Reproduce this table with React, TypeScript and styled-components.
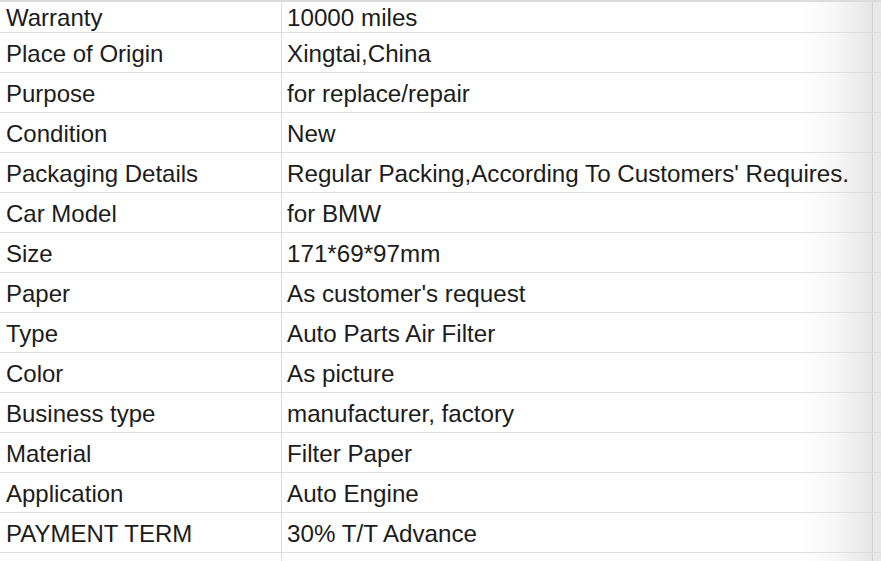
import React from "react";
import styled, { createGlobalStyle } from "styled-components";

const Global = createGlobalStyle`
  html, body { margin: 0; padding: 0; background: #ffffff; }
  body { font-family: "Liberation Sans", Arial, sans-serif; overflow: hidden; }
  *, *::before, *::after { box-sizing: border-box; }
`;

const rows: [string, string][] = [
  ["Warranty", "10000 miles"],
  ["Place of Origin", "Xingtai,China"],
  ["Purpose", "for replace/repair"],
  ["Condition", "New"],
  ["Packaging Details", "Regular Packing,According To Customers' Requires."],
  ["Car Model", "for BMW"],
  ["Size", "171*69*97mm"],
  ["Paper", "As customer's request"],
  ["Type", "Auto Parts Air Filter"],
  ["Color", "As picture"],
  ["Business type", "manufacturer, factory"],
  ["Material", "Filter Paper"],
  ["Application", "Auto Engine"],
  ["PAYMENT TERM", "30% T/T Advance"],
  ["", ""],
];

const Sheet = styled.div`
  width: 881px;
  height: 561px;
  overflow: hidden;
  border-top: 2px solid #dcdcdc;
  display: flex;
  flex-direction: column;
`;

const Row = styled.div<{ $h: number }>`
  display: grid;
  grid-template-columns: 282px 1fr 9px;
  height: ${(p) => p.$h}px;
  flex: 0 0 auto;
  border-bottom: 1px solid #dedede;
`;

const Cell = styled.div`
  display: flex;
  align-items: center;
  padding: 2px 0 0 6px;
  font-size: 24px;
  color: #1c1c1c;
  white-space: nowrap;
  overflow: hidden;
`;

const Label = styled(Cell)`
  border-right: 1px solid #dedede;
`;

const Value = styled(Cell)`
  padding-left: 5px;
  font-size: 24.2px;
  background: linear-gradient(
    to right,
    #ffffff 0,
    #ffffff calc(100% - 75px),
    #f8f8f8 calc(100% - 40px),
    #e6e6e6 100%
  );
`;

const Edge = styled.div`
  border-left: 1px solid #d2d2d2;
  background: #e8e8e8;
`;

export default function App() {
  return (
    <>
      <Global />
      <Sheet>
        {rows.map(([k, v], i) => (
          <Row key={i} $h={i === 0 ? 31 : 40}>
            <Label>{k}</Label>
            <Value>{v}</Value>
            <Edge />
          </Row>
        ))}
      </Sheet>
    </>
  );
}
